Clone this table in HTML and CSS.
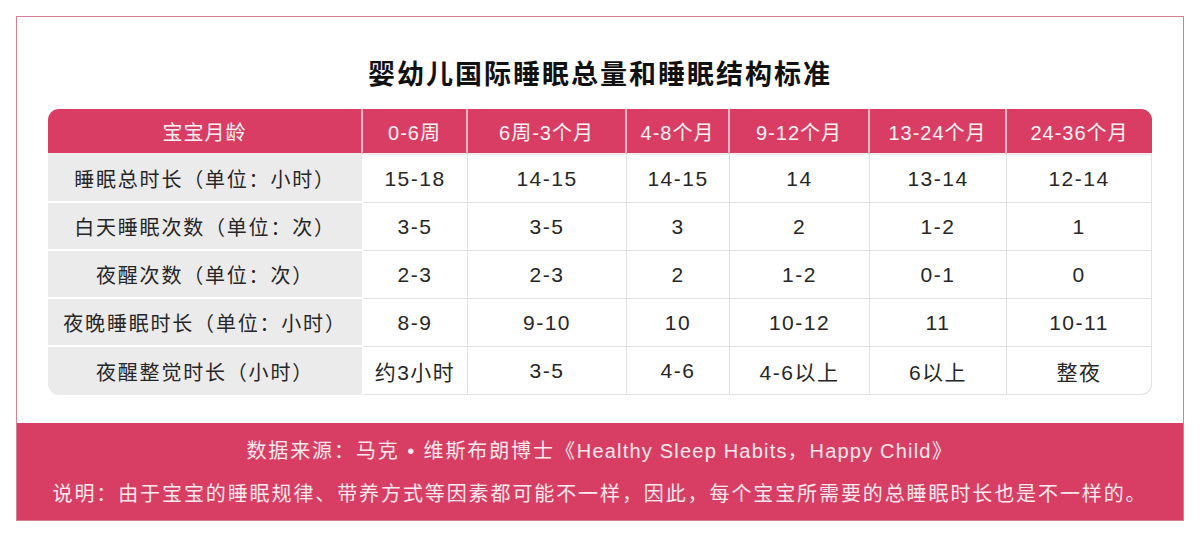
FILE: index.html
```html
<!DOCTYPE html>
<html lang="zh-CN">
<head>
<meta charset="utf-8">
<title>婴幼儿国际睡眠总量和睡眠结构标准</title>
<link rel="stylesheet" href="styles.css">
</head>
<body>
<div class="frame">
  <div class="content">
    <h1 class="title">婴幼儿国际睡眠总量和睡眠结构标准</h1>
    <table class="sleep">
      <colgroup>
        <col class="c0"><col class="c1"><col class="c2"><col class="c3"><col class="c4"><col class="c5"><col class="c6">
      </colgroup>
      <thead>
        <tr>
          <th>宝宝月龄</th><th>0-6周</th><th>6周-3个月</th><th>4-8个月</th><th>9-12个月</th><th>13-24个月</th><th>24-36个月</th>
        </tr>
      </thead>
      <tbody>
        <tr><td class="label">睡眠总时长（单位：小时）</td><td>15-18</td><td>14-15</td><td>14-15</td><td>14</td><td>13-14</td><td>12-14</td></tr>
        <tr><td class="label">白天睡眠次数（单位：次）</td><td>3-5</td><td>3-5</td><td>3</td><td>2</td><td>1-2</td><td>1</td></tr>
        <tr><td class="label">夜醒次数（单位：次）</td><td>2-3</td><td>2-3</td><td>2</td><td>1-2</td><td>0-1</td><td>0</td></tr>
        <tr><td class="label">夜晚睡眠时长（单位：小时）</td><td>8-9</td><td>9-10</td><td>10</td><td>10-12</td><td>11</td><td>10-11</td></tr>
        <tr><td class="label">夜醒整觉时长（小时）</td><td>约3小时</td><td>3-5</td><td>4-6</td><td>4-6以上</td><td>6以上</td><td>整夜</td></tr>
      </tbody>
    </table>
  </div>
  <div class="footer">
    <p>数据来源：马克 • 维斯布朗博士《<span class="latin">Healthy Sleep Habits</span>，<span class="latin">Happy Child</span>》</p>
    <p>说明：由于宝宝的睡眠规律、带养方式等因素都可能不一样，因此，每个宝宝所需要的总睡眠时长也是不一样的。</p>
  </div>
</div>
</body>
</html>
```
FILE: styles.css
```css
* { box-sizing: border-box; }
html, body { margin: 0; padding: 0; background: #ffffff; }
body {
  width: 1200px;
  height: 540px;
  padding: 16px;
  font-family: "Liberation Sans", "Noto Sans CJK SC", sans-serif;
  color: #262626;
}
.frame {
  width: 1168px;
  border: 1px solid #d27f94;
  background: #ffffff;
}
.content {
  padding: 36px 31px 28px 31px;
}
.title {
  margin: 0 0 16px 0;
  text-align: center;
  font-family: "Noto Sans CJK SC", sans-serif;
  font-size: 27px;
  line-height: 40px;
  font-weight: 700;
  letter-spacing: 2px;
  color: #111111;
}
.sleep {
  width: 1104px;
  border-collapse: separate;
  border-spacing: 0;
  table-layout: fixed;
}
.c0 { width: 315px; }
.c1 { width: 105px; }
.c2 { width: 159px; }
.c3 { width: 103px; }
.c4 { width: 140px; }
.c5 { width: 137px; }
.c6 { width: 145px; }
.sleep th {
  height: 46px;
  background: #d93d63;
  color: #fff4f7;
  font-weight: 400;
  font-size: 20px;
  letter-spacing: 1px;
  text-align: center;
  padding: 0;
  border-right: 2px solid #eeb7c5;
  border-bottom: 2px solid #eeeeee;
}
.sleep th:first-child { border-top-left-radius: 11px; }
.sleep th:last-child { border-top-right-radius: 11px; border-right: none; }
.sleep td {
  height: 48px;
  padding: 0;
  text-align: center;
  font-size: 21px;
  letter-spacing: 1.5px;
  color: #262626;
  border-right: 1px solid #e2e2e2;
  border-bottom: 1px solid #e2e2e2;
  background: #ffffff;
}
.sleep td.label {
  font-size: 20px;
  letter-spacing: 1.8px;
  background: #ebebeb;
  border-right: 1px solid #ffffff;
  border-bottom: 2px solid #ffffff;
}
.sleep tr:last-child td.label { border-bottom: none; border-bottom-left-radius: 11px; }
.sleep tr:last-child td:last-child { border-bottom-right-radius: 11px; }
.footer {
  background: #d83d63;
  padding: 7px 0 4px 0;
  text-align: center;
  color: #fde9ef;
  font-size: 20px;
  line-height: 43px;
}
.footer p {
  margin: 0;
  letter-spacing: 1.9px;
}
.footer .latin { letter-spacing: 1.2px; }
```
